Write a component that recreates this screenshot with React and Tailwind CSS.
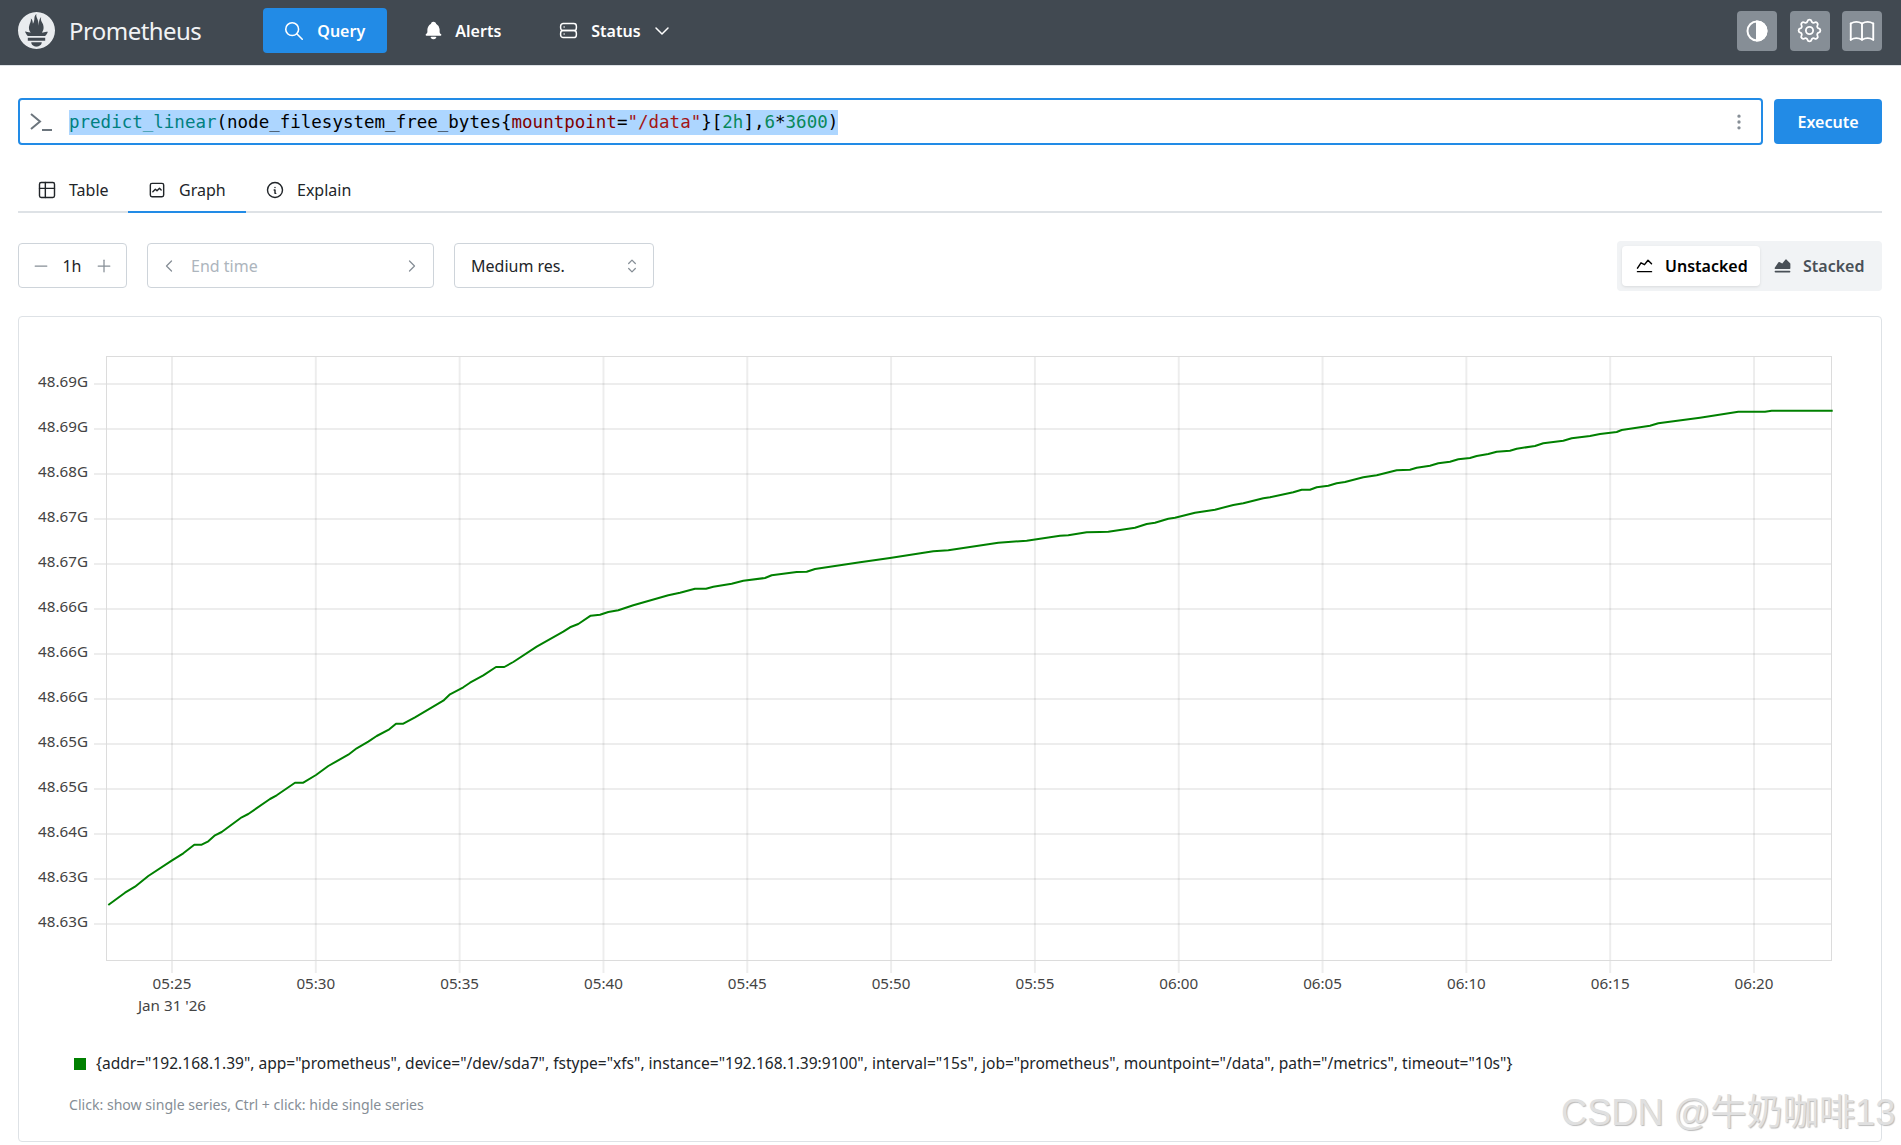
import React from 'react';
import { SiPrometheus } from 'react-icons/si';
import {
  TbSearch, TbBellFilled, TbServer, TbChevronDown, TbTable, TbGraph, TbInfoCircle,
  TbMinus, TbPlus, TbChevronLeft, TbChevronRight, TbSelector, TbSettings, TbBook,
  TbDotsVertical, TbChartLine, TbChartAreaFilled,
} from 'react-icons/tb';

const FONT = "font-['Noto_Sans',sans-serif]";

const Y_LABELS = ['48.69G', '48.69G', '48.68G', '48.67G', '48.67G', '48.66G', '48.66G', '48.66G', '48.65G', '48.65G', '48.64G', '48.63G', '48.63G'];
const X_LABELS = ['05:25', '05:30', '05:35', '05:40', '05:45', '05:50', '05:55', '06:00', '06:05', '06:10', '06:15', '06:20'];

// series traced off the graph, page coordinates
const SERIES = [
  [108.3, 905], [125, 892.7], [135, 886.7], [148.3, 876], [171.7, 860.7], [183.3, 853.3], [194.3, 844.7], [201.7, 844.7], [208.3, 841.3], [215, 835.3], [221.7, 832],
  [241.7, 817.3], [248.3, 814], [270, 799], [276.7, 795.3], [295, 782.7], [303.3, 782.7], [316, 775], [328.3, 766], [348.3, 754.7], [356.7, 748.3], [368.3, 741.7],
  [376.7, 736], [389.3, 729.3], [396, 723.7], [403.3, 723.7], [415, 717.3], [443.3, 700.7], [450, 694.3], [463.3, 687.3], [470, 682.7], [483.3, 675.3], [496, 667],
  [504.3, 667], [513.3, 662], [536.7, 646.7], [563.3, 631.7], [570, 627.3], [578.3, 624], [590.7, 615.7], [600, 614.7], [608.3, 612], [618.3, 610.3], [633.3, 605.3],
  [668.3, 595.3], [680, 592.7], [695, 588.7], [706, 588.7], [713.3, 586.7], [731.7, 583.7], [743.3, 580.7], [765, 578], [771.7, 575.3], [796.7, 572], [806.7, 571.7],
  [815, 569], [860, 562.3], [890, 558], [933.3, 551.3], [948.3, 550.3], [998.3, 542.7], [1008.3, 542], [1026.7, 540.7], [1060, 535.7], [1068.3, 535.3], [1086.7, 532.3],
  [1100, 532], [1108.3, 531.7], [1135, 527.7], [1146.7, 524], [1155, 522.7], [1168.3, 518.7], [1175, 517.7], [1195, 512.7], [1215, 509.7], [1233.3, 505], [1243.3, 503.3],
  [1263.3, 498.3], [1270, 497.3], [1293.3, 492.3], [1301.7, 489.7], [1310, 489.7], [1316.7, 487.3], [1328.3, 485.7], [1336.7, 483.3], [1345, 482], [1363.3, 477.3],
  [1376.7, 475.3], [1396.7, 470.3], [1410, 469.7], [1416.7, 467.7], [1430, 465.7], [1438.3, 463.3], [1450, 461.7], [1458.3, 459.3], [1470, 458], [1476.7, 456], [1488.3, 454],
  [1496.7, 451.7], [1510, 450.7], [1516.7, 448.7], [1535, 446], [1543.3, 443.3], [1563.3, 440.7], [1571.7, 438.3], [1590, 436], [1600, 434], [1616.7, 432], [1621.7, 430],
  [1650, 425.7], [1658.3, 423.3], [1700, 417.7], [1738.3, 411.7], [1765, 411.7], [1771.7, 410.7], [1832.7, 410.7],
];

function Chart() {
  return (
    <svg viewBox="19 317 1862 700" className="block w-full h-[700px]">
      {Y_LABELS.map((_, i) => (
        <line key={i} x1="94" x2="1832" y1={384 + 45 * i} y2={384 + 45 * i} stroke="#000" strokeOpacity="0.07" strokeWidth="2" />
      ))}
      {X_LABELS.map((_, i) => (
        <line key={i} x1={172 + 143.82 * i} x2={172 + 143.82 * i} y1="356" y2="973" stroke="#000" strokeOpacity="0.07" strokeWidth="2" />
      ))}
      <rect x="106.5" y="356.5" width="1725" height="604" fill="none" stroke="#dcdcdc" />
      <polyline points={SERIES.map((p) => p.join(',')).join(' ')} fill="none" stroke="#008000" strokeWidth="2" strokeLinejoin="round" />
      {Y_LABELS.map((t, i) => (
        <text key={i} x="88" y={387 + 45 * i} textAnchor="end" className="text-[15.2px] fill-[#444]">{t}</text>
      ))}
      {X_LABELS.map((t, i) => (
        <text key={i} x={172 + 143.82 * i} y="989" textAnchor="middle" className="text-[15.2px] fill-[#444]">{t}</text>
      ))}
      <text x="172" y="1011" textAnchor="middle" className="text-[15.2px] fill-[#444]">Jan 31 '26</text>
    </svg>
  );
}

function HalfCircle() {
  return (
    <svg width="24" height="24" viewBox="0 0 24 24" fill="none" stroke="currentColor" strokeWidth="2">
      <circle cx="12" cy="12" r="9.5" />
      <path d="M12 2.5a9.5 9.5 0 0 1 0 19z" fill="currentColor" />
    </svg>
  );
}

function NavIconButton({ children }) {
  return (
    <div className="w-10 h-10 rounded bg-[#868e96] text-white flex items-center justify-center">{children}</div>
  );
}

export default function App() {
  return (
    <div className={`${FONT} relative h-[1145px] overflow-hidden bg-white text-black`}>
      <header className="h-[66px] bg-[#414951] border-b border-[#dee2e6] flex items-center pl-[18px] pr-[19px] pb-[4px] text-white">
        <SiPrometheus size={37} className="text-[#e9ecef]" />
        <span className="ml-[14px] text-[24px] text-[#f1f3f5] tracking-[-0.55px]">Prometheus</span>
        <div className="ml-[62px] w-[124px] h-[45px] rounded bg-[#228be6] flex items-center pl-[20px] gap-[12px] text-[16px] font-semibold">
          <TbSearch size={22} strokeWidth={1.7} />
          <span>Query</span>
        </div>
        <div className="ml-[36px] flex items-center gap-[11px] text-[16px] font-semibold">
          <TbBellFilled size={21} />
          <span>Alerts</span>
        </div>
        <div className="ml-[57px] flex items-center gap-[12px] text-[16px] font-semibold">
          <TbServer size={21} strokeWidth={1.7} />
          <span>Status</span>
          <TbChevronDown size={24} strokeWidth={1.5} className="-ml-[3px]" />
        </div>
        <div className="ml-auto flex gap-[12.5px]">
          <NavIconButton><HalfCircle /></NavIconButton>
          <NavIconButton><TbSettings size={29} strokeWidth={1.5} /></NavIconButton>
          <NavIconButton><TbBook size={30} strokeWidth={1.5} /></NavIconButton>
        </div>
      </header>

      <main className="px-[18px] pr-[19px]">
        <div className="mt-[32px] flex gap-[11px]">
          <div className="flex-1 h-[47px] rounded border-2 border-[#228be6] flex items-center pl-[10px] pr-[12px]">
            <svg width="24" height="24" viewBox="0 0 24 24" fill="none" stroke="#6c757d" strokeWidth="2" className="shrink-0">
              <path d="M1 4l9 7.5l-9 7.5" />
              <path d="M12 20h10" />
            </svg>
            <div className="ml-[15px] mt-px h-[25px] leading-[25px] bg-[#add6ff] font-['DejaVu_Sans_Mono',monospace] text-[17.5px] whitespace-pre">
              <span className="text-[#008080]">predict_linear</span>
              <span>(node_filesystem_free_bytes{'{'}</span>
              <span className="text-[#800000]">mountpoint</span>
              <span>=</span>
              <span className="text-[#a31515]">"/data"</span>
              <span>{'}'}[</span>
              <span className="text-[#09885a]">2h</span>
              <span>],</span>
              <span className="text-[#09885a]">6</span>
              <span>*</span>
              <span className="text-[#09885a]">3600</span>
              <span>)</span>
            </div>
            <TbDotsVertical size={20} className="ml-auto text-[#868e96]" />
          </div>
          <div className="w-[108px] h-[45px] mt-px rounded bg-[#228be6] text-white text-[16px] font-semibold flex items-center justify-center">
            Execute
          </div>
        </div>

        <div className="mt-[25px] h-[43px] flex border-b-2 border-[#dee2e6] text-[16px] text-[#212529]">
          <div className="w-[110px] -mb-[2px] pl-[19px] pb-[4px] flex items-center gap-[12px]">
            <TbTable size={20} strokeWidth={1.7} />
            <span>Table</span>
          </div>
          <div className="w-[118px] -mb-[2px] pl-[19px] pb-[2px] flex items-center gap-[12px] border-b-2 border-[#228be6]">
            <TbGraph size={20} strokeWidth={1.7} />
            <span>Graph</span>
          </div>
          <div className="-mb-[2px] pl-[19px] pb-[4px] flex items-center gap-[12px]">
            <TbInfoCircle size={20} strokeWidth={1.7} />
            <span>Explain</span>
          </div>
        </div>

        <div className="mt-[30px] h-[45px] flex items-center text-[16px]">
          <div className="w-[109px] h-[45px] rounded border border-[#ced4da] flex items-center justify-between px-[12px] text-[#212529]">
            <TbMinus size={20} strokeWidth={1.5} className="text-[#868e96]" />
            <span className="-ml-px">1h</span>
            <TbPlus size={20} strokeWidth={1.5} className="text-[#868e96]" />
          </div>
          <div className="ml-[20px] w-[287px] h-[45px] rounded border border-[#ced4da] flex items-center px-[11px] text-[#adb5bd]">
            <TbChevronLeft size={20} strokeWidth={1.5} className="text-[#868e96]" />
            <span className="ml-[12px]">End time</span>
            <TbChevronRight size={20} strokeWidth={1.5} className="ml-auto text-[#868e96]" />
          </div>
          <div className="ml-[20px] w-[200px] h-[45px] rounded border border-[#ced4da] flex items-center pl-[16px] pr-[11px] text-[#212529]">
            <span>Medium res.</span>
            <TbSelector size={20} strokeWidth={1.5} className="ml-auto text-[#868e96]" />
          </div>
          <div className="ml-auto w-[265px] h-[50px] rounded bg-[#f1f3f5] p-[5px] flex items-center">
            <div className="w-[138px] h-[40px] rounded bg-white shadow-[0_1px_3px_rgba(0,0,0,0.1)] flex items-center pl-[12px] gap-[10px] font-semibold text-black">
              <TbChartLine size={21} strokeWidth={1.7} />
              <span>Unstacked</span>
            </div>
            <div className="flex items-center pl-[12px] gap-[10px] font-semibold text-[#495057]">
              <TbChartAreaFilled size={21} />
              <span>Stacked</span>
            </div>
          </div>
        </div>

        <div className="mt-[28px] h-[826px] rounded border border-[#dee2e6]">
          <Chart />
          <div className="mt-[35px] ml-[55px] flex items-center gap-[10px] text-[15.55px] text-[#212529]">
            <span className="w-3 h-3 bg-[#008000] shrink-0" />
            <span className="whitespace-nowrap">{'{addr="192.168.1.39", app="prometheus", device="/dev/sda7", fstype="xfs", instance="192.168.1.39:9100", interval="15s", job="prometheus", mountpoint="/data", path="/metrics", timeout="10s"}'}</span>
          </div>
          <div className="mt-[19px] ml-[50px] text-[14.1px] text-[#868e96]">Click: show single series, Ctrl + click: hide single series</div>
        </div>
      </main>

      <div className="absolute left-[1561px] top-[1086px] whitespace-nowrap text-[36.2px] text-[#e0e0e0] font-['Liberation_Sans','Noto_Sans_CJK_SC',sans-serif] [text-shadow:1px_1px_1px_#bbb]">
        CSDN @牛奶咖啡13
      </div>
    </div>
  );
}
